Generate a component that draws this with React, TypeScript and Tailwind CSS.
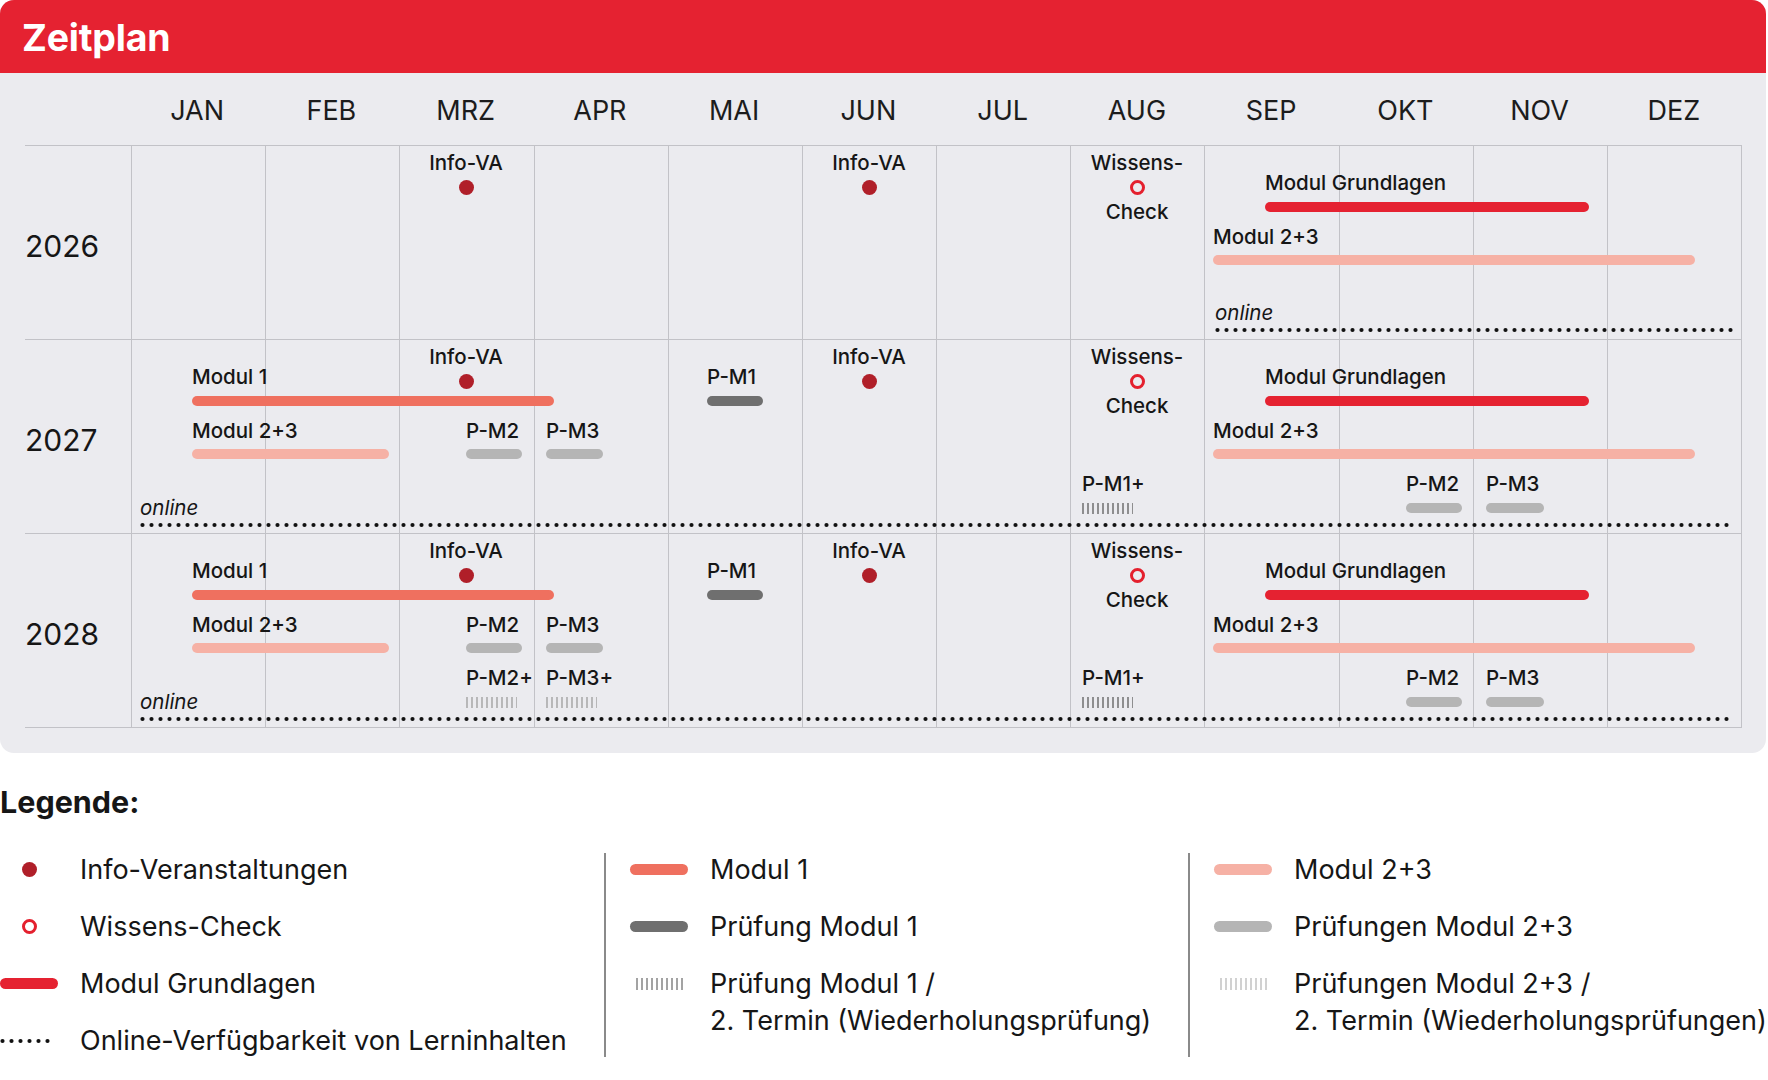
import React from 'react';

type Bar = { label: string; x1: number; x2: number; ly: number; by: number; color: string };
type Hatch = { label: string; x1: number; x2: number; ly: number; by: number; color: string };
type Online = { x1: number; x2: number; ly: number; by: number };
type YearRow = {
  year: string;
  infos: number[];
  check: number;
  bars: Bar[];
  hatches: Hatch[];
  online: Online;
};

const MONTHS = ['JAN', 'FEB', 'MRZ', 'APR', 'MAI', 'JUN', 'JUL', 'AUG', 'SEP', 'OKT', 'NOV', 'DEZ'];

const RED = '#e52231';
const M1 = '#ef705f';
const M23 = '#f6b1a5';
const PM1 = '#6f6f6f';
const PM23 = '#b5b5b5';

// shared bars of every year (second half)
const lateBars: Bar[] = [
  { label: 'Modul Grundlagen', x1: 1134, x2: 1458, ly: 38, by: 62, color: RED },
  { label: 'Modul 2+3', x1: 1082, x2: 1564, ly: 92, by: 115, color: M23 },
];

const earlyBars: Bar[] = [
  { label: 'Modul 1', x1: 61, x2: 423, ly: 38, by: 62, color: M1 },
  { label: 'Modul 2+3', x1: 61, x2: 258, ly: 92, by: 115, color: M23 },
  { label: 'P-M2', x1: 335, x2: 391, ly: 92, by: 115, color: PM23 },
  { label: 'P-M3', x1: 415, x2: 472, ly: 92, by: 115, color: PM23 },
  { label: 'P-M1', x1: 576, x2: 632, ly: 38, by: 62, color: PM1 },
  { label: 'P-M2', x1: 1275, x2: 1331, ly: 145, by: 169, color: PM23 },
  { label: 'P-M3', x1: 1355, x2: 1413, ly: 145, by: 169, color: PM23 },
];

const ROWS: YearRow[] = [
  {
    year: '2026',
    infos: [335, 738],
    check: 1006,
    bars: lateBars,
    hatches: [],
    online: { x1: 1084, x2: 1602, ly: 168, by: 185 },
  },
  {
    year: '2027',
    infos: [335, 738],
    check: 1006,
    bars: [...earlyBars, ...lateBars],
    hatches: [{ label: 'P-M1+', x1: 951, x2: 1002, ly: 145, by: 169, color: '#777777' }],
    online: { x1: 9, x2: 1602, ly: 169, by: 186 },
  },
  {
    year: '2028',
    infos: [335, 738],
    check: 1006,
    bars: [...earlyBars, ...lateBars],
    hatches: [
      { label: 'P-M2+', x1: 335, x2: 386, ly: 145, by: 169, color: '#ababab' },
      { label: 'P-M3+', x1: 415, x2: 466, ly: 145, by: 169, color: '#ababab' },
      { label: 'P-M1+', x1: 951, x2: 1002, ly: 145, by: 169, color: '#777777' },
    ],
    online: { x1: 9, x2: 1602, ly: 169, by: 186 },
  },
];

const HatchMarks = ({ width, color, height = 11 }: { width: number; color: string; height?: number }) => {
  const n = Math.floor(width / 5) + 1;
  return (
    <svg width={width} height={height} className="block">
      {Array.from({ length: n }).map((_, i) => (
        <line key={i} x1={i * 5 + 1} x2={i * 5 + 1} y1={0} y2={height} stroke={color} strokeWidth={1.6} />
      ))}
    </svg>
  );
};

const Dots = ({ width }: { width: number }) => (
  <svg width={width} height={6} className="block">
    <line x1={2.5} x2={width - 2} y1={3} y2={3} stroke="#111" strokeWidth={4.2} strokeLinecap="round" strokeDasharray="0 9" />
  </svg>
);

const InfoDot = () => <span className="block w-[15px] h-[15px] rounded-full bg-[#b01f29]" />;
const CheckRing = () => <span className="block w-[15px] h-[15px] rounded-full border-[3px] border-[#e4202e]" />;

const labelClass = 'absolute whitespace-nowrap text-[20.5px] leading-[24px] font-medium text-[#161616]';

const ChartRow = ({ row }: { row: YearRow }) => (
  <div className="flex h-[194px] border-b border-[#c2c2c7]">
    <div className="w-[106px] flex items-center pt-[8px] text-[30px] text-[#161616]">{row.year}</div>
    <div className="relative flex-1">
      <div className="grid grid-cols-12 h-full border-r border-[#c2c2c7]">
        {MONTHS.map((m) => (
          <div key={m} className="border-l border-[#c2c2c7]" />
        ))}
      </div>

      {row.infos.map((x, i) => (
        <div key={i} className="absolute top-[5px] w-[120px] flex flex-col items-center gap-[5px]" style={{ left: x - 60 }}>
          <span className="text-[20.5px] leading-[24px] font-medium text-[#161616]">Info-VA</span>
          <InfoDot />
        </div>
      ))}

      <div className="absolute top-[5px] w-[140px] flex flex-col items-center gap-[5px]" style={{ left: row.check - 70 }}>
        <span className="text-[20.5px] leading-[24px] font-medium text-[#161616]">Wissens-</span>
        <CheckRing />
        <span className="text-[20.5px] leading-[24px] font-medium text-[#161616]">Check</span>
      </div>

      {row.bars.map((b, i) => (
        <React.Fragment key={i}>
          <span className={labelClass} style={{ left: b.x1, top: b.ly - 13 }}>{b.label}</span>
          <span className="absolute h-[10px] rounded-full" style={{ left: b.x1, top: b.by - 6, width: b.x2 - b.x1, background: b.color }} />
        </React.Fragment>
      ))}

      {row.hatches.map((h, i) => (
        <React.Fragment key={i}>
          <span className={labelClass} style={{ left: h.x1, top: h.ly - 13 }}>{h.label}</span>
          <span className="absolute" style={{ left: h.x1, top: h.by - 6 }}>
            <HatchMarks width={h.x2 - h.x1} color={h.color} />
          </span>
        </React.Fragment>
      ))}

      <span className="absolute italic text-[20.5px] leading-[24px] text-[#161616]" style={{ left: row.online.x1, top: row.online.ly - 13 }}>
        online
      </span>
      <span className="absolute" style={{ left: row.online.x1, top: row.online.by - 4 }}>
        <Dots width={row.online.x2 - row.online.x1} />
      </span>
    </div>
  </div>
);

const LegendRow = ({ icon, children, center = true }: { icon: React.ReactNode; children: React.ReactNode; center?: boolean }) => (
  <div className="flex items-start">
    <div className={`w-[58px] h-[37px] flex items-center shrink-0 ${center ? 'justify-center' : 'justify-start'}`}>{icon}</div>
    <div className="ml-[22px] text-[27px] leading-[37px] text-[#161616] whitespace-nowrap">{children}</div>
  </div>
);

const LegendBar = ({ color }: { color: string }) => (
  <span className="block w-[58px] h-[11px] rounded-full" style={{ background: color }} />
);

export default function App() {
  return (
    <div className="w-[1768px] h-[1080px] bg-white font-['Inter','Liberation_Sans',sans-serif] text-[#161616] overflow-hidden">
      {/* Zeitplan card */}
      <section className="w-[1766px] rounded-[14px] overflow-hidden bg-[#ebebef]">
        <header className="h-[73px] bg-[#e52231] flex items-center px-[22px] pt-[3px]">
          <h1 className="text-white text-[37.5px] font-bold leading-none tracking-[-0.2px]">Zeitplan</h1>
        </header>

        <div className="pl-[25px] pr-[24px] pb-[25px]">
          <div className="flex h-[72px] items-center">
            <div className="w-[106px]" />
            <div className="grid grid-cols-12 flex-1">
              {MONTHS.map((m) => (
                <div key={m} className="text-center text-[27px] leading-[32px] text-[#1c1c1c] pt-[4px] pr-[2px]">
                  {m}
                </div>
              ))}
            </div>
          </div>

          <div className="border-t border-[#c2c2c7]">
            {ROWS.map((r) => (
              <ChartRow key={r.year} row={r} />
            ))}
          </div>
        </div>
      </section>

      {/* Legend */}
      <h2 className="mt-[31px] text-[30.5px] leading-[36px] font-bold">Legende:</h2>

      <div className="mt-[31px] flex">
        <div className="w-[604px] flex flex-col gap-[20px]">
          <LegendRow icon={<InfoDot />}>Info-Veranstaltungen</LegendRow>
          <LegendRow icon={<CheckRing />}>Wissens-Check</LegendRow>
          <LegendRow icon={<LegendBar color={RED} />}>Modul Grundlagen</LegendRow>
          <LegendRow icon={<Dots width={52} />} center={false}>Online-Verfügbarkeit von Lerninhalten</LegendRow>
        </div>

        <div className="w-[2px] bg-[#8a8a8a] my-[2px]" />

        <div className="w-[582px] pl-[24px] flex flex-col gap-[20px]">
          <LegendRow icon={<LegendBar color={M1} />}>Modul 1</LegendRow>
          <LegendRow icon={<LegendBar color={PM1} />}>Prüfung Modul 1</LegendRow>
          <LegendRow icon={<HatchMarks width={47} color="#8c8c8c" height={12} />}>
            Prüfung Modul 1 /<br />2. Termin (Wiederholungsprüfung)
          </LegendRow>
        </div>

        <div className="w-[2px] bg-[#8a8a8a] my-[2px]" />

        <div className="pl-[24px] flex flex-col gap-[20px]">
          <LegendRow icon={<LegendBar color={M23} />}>Modul 2+3</LegendRow>
          <LegendRow icon={<LegendBar color={PM23} />}>Prüfungen Modul 2+3</LegendRow>
          <LegendRow icon={<HatchMarks width={47} color="#c6c6c6" height={12} />}>
            Prüfungen Modul 2+3 /<br />2. Termin (Wiederholungsprüfungen)
          </LegendRow>
        </div>
      </div>
    </div>
  );
}
